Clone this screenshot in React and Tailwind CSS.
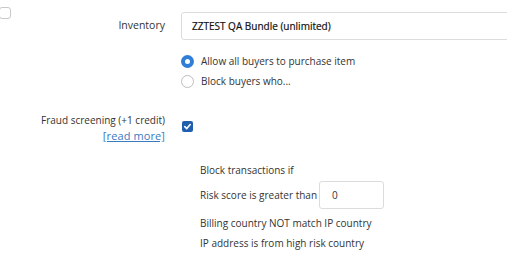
import React from 'react';

const App = () => {
  return (
    <div className="w-[507px] h-[255px] overflow-hidden bg-white text-[10px] text-[#333] relative" style={{ fontFamily: '"Open Sans", sans-serif' }}>
      <div className="absolute left-[-1px] top-[7px] w-[12px] h-[12px] rounded-[3px] border border-[#c8c8c8]" />

      <div className="pt-[12px] flex items-center">
        <div className="w-[165px] shrink-0 text-right text-[10.5px]">Inventory</div>
        <div className="ml-[16px] h-[28px] w-[340px] shrink-0 border border-[#dcdcdc] rounded-[3px] flex items-center pl-[10px] font-medium text-[#111] [-webkit-text-stroke:0.2px_#111]">
          ZZTEST QA Bundle (unlimited)
        </div>
      </div>

      <div className="ml-[181px] mt-[15px] flex flex-col gap-[7px]">
        <label className="flex items-center gap-[7px] h-[13px]">
          <span className="w-[13px] h-[13px] rounded-full bg-[#2f7ed8] flex items-center justify-center">
            <span className="w-[5px] h-[5px] rounded-full bg-white" />
          </span>
          <span>Allow all buyers to purchase item</span>
        </label>
        <label className="flex items-center gap-[7px] h-[13px]">
          <span className="w-[13px] h-[13px] rounded-full border border-[#bdbdbd] bg-white" />
          <span>Block buyers who...</span>
        </label>
      </div>

      <div className="mt-[25px] flex items-start">
        <div className="w-[165px] shrink-0 text-right leading-[15px]">
          <div>Fraud screening (+1 credit)</div>
          <div className="text-[#3a7bbf] underline text-[11px] tracking-[0.1px]">[read more]</div>
        </div>
        <div className="ml-[17px] mt-[8px] w-[11px] h-[11px] rounded-[2px] bg-[#1f5fae] flex items-center justify-center">
          <svg width="9" height="9" viewBox="0 0 10 10" fill="none">
            <path d="M2 5.2 L4.2 7.3 L8 2.8" stroke="white" strokeWidth="1.8" strokeLinecap="round" strokeLinejoin="round" />
          </svg>
        </div>
      </div>

      <div className="ml-[200px] mt-[19px] flex flex-col">
        <div className="leading-[16px]">Block transactions if</div>
        <div className="flex items-center mt-[3px]">
          <span>Risk score is greater than</span>
          <div className="ml-[2px] w-[65px] h-[28px] border border-[#dcdcdc] rounded-[3px] flex items-center pl-[12px]">0</div>
        </div>
        <div className="mt-[6px] leading-[16px]">Billing country NOT match IP country</div>
        <div className="mt-[4px] leading-[16px]">IP address is from high risk country</div>
      </div>
    </div>
  );
};

export default App;
